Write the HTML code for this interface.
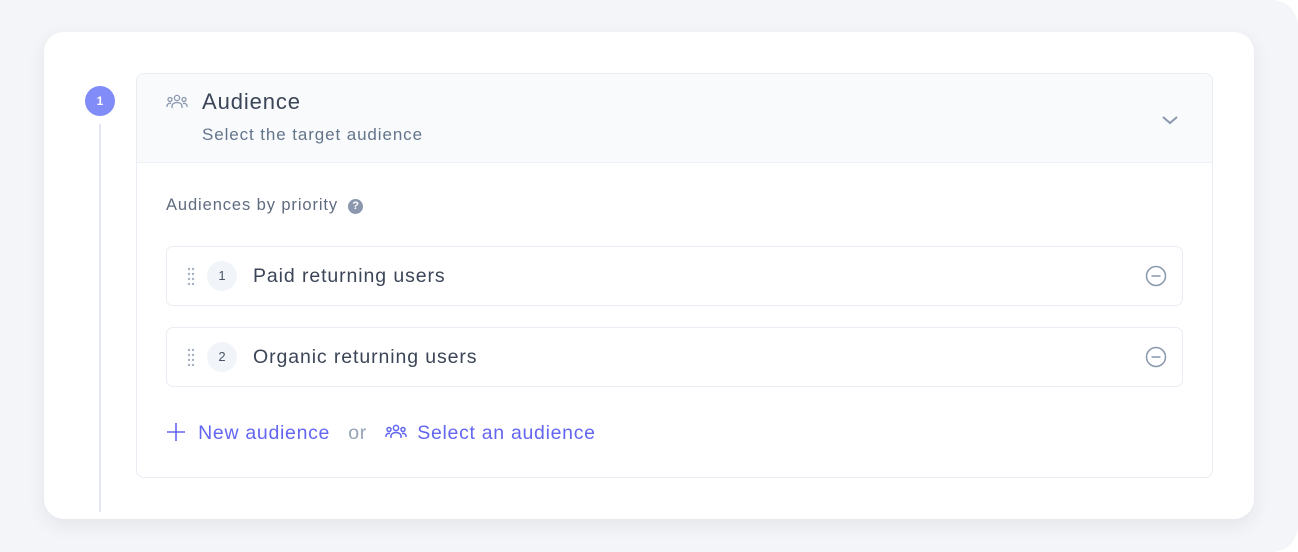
<!DOCTYPE html>
<html><head><style>
*{margin:0;padding:0;box-sizing:border-box}
body{width:1298px;height:552px;background:#fff;font-family:"Liberation Sans",sans-serif;overflow:hidden;position:relative}
.bg{position:absolute;left:0;top:0;width:1298px;height:552px;background:#f4f5f8;border-radius:0 26px 26px 0}
.card{position:absolute;left:44px;top:32px;width:1210px;height:487px;background:#fff;border-radius:20px;box-shadow:0 6px 18px rgba(30,40,80,0.08)}
.step{position:absolute;left:85px;top:86px;width:30px;height:30px;border-radius:50%;background:#818cf8;color:#fff;font-size:12px;font-weight:bold;text-align:center;line-height:30px}
.line{position:absolute;left:99px;top:124px;width:2px;height:388px;background:#e3e6f0}
.panel{position:absolute;left:136px;top:73px;width:1077px;height:405px;border:1px solid #e9edf3;border-radius:8px;overflow:hidden}
.head{height:89px;background:#f8fafc;border-bottom:1px solid #edf0f5;position:relative}
.t{position:absolute;left:65px;top:15px;font-size:22px;letter-spacing:0.9px;color:#3b4557}
.s{position:absolute;left:65px;top:51px;font-size:17px;letter-spacing:0.9px;color:#64748b}
.lbl{position:absolute;left:29px;top:122px;font-size:16.5px;letter-spacing:0.9px;color:#5f6b7f}
.q{display:inline-block;width:15px;height:15px;border-radius:50%;background:#8a97ad;color:#fff;font-size:11px;font-weight:bold;text-align:center;line-height:15px;margin-left:10px;vertical-align:1px;letter-spacing:0}
.row{position:absolute;left:29px;width:1017px;height:60px;border:1px solid #e9edf3;border-radius:7px}
.num{position:absolute;left:40px;top:14px;width:30px;height:30px;border-radius:50%;background:#f1f4f8;color:#4b5568;font-size:13px;text-align:center;line-height:30px}
.rt{position:absolute;left:86px;top:18px;font-size:19.5px;letter-spacing:0.9px;color:#3b4557;font-weight:500}
.dots{position:absolute;left:20px;top:20px}
.min{position:absolute;right:15px;top:18px}
.links{position:absolute;left:29px;top:348px;font-size:19.5px;letter-spacing:0.7px;color:#6366f1;white-space:nowrap}
</style></head><body>
<div class="bg"></div>
<div class="card"></div>
<div class="step">1</div>
<div class="line"></div>
<div class="panel">
 <div class="head">
  <svg style="position:absolute;left:29px;top:20px" width="22" height="16" viewBox="0 0 22 16" fill="none" stroke="#8a97ad" stroke-width="1.3"><circle cx="11" cy="4" r="2.6"/><circle cx="4" cy="5.5" r="2"/><circle cx="18" cy="5.5" r="2"/><path d="M6 14v-2a5 3.5 0 0 1 10 0v2M1 13v-1.5a3 2.5 0 0 1 4-2M21 13v-1.5a3 2.5 0 0 0-4-2"/></svg>
  <div class="t">Audience</div>
  <div class="s">Select the target audience</div>
  <svg style="position:absolute;left:1024px;top:40px" width="18" height="12" viewBox="0 0 18 12" fill="none" stroke="#8a97ad" stroke-width="2"><path d="M2 3l7 6 7-6"/></svg>
 </div>
 <div class="lbl">Audiences by priority<span class="q">?</span></div>
 <div class="row" style="top:172px">
  <svg class="dots" width="8" height="18" fill="#a5b0c2"><circle cx="2" cy="2" r="1.2"/><circle cx="6" cy="2" r="1.2"/><circle cx="2" cy="7" r="1.2"/><circle cx="6" cy="7" r="1.2"/><circle cx="2" cy="12" r="1.2"/><circle cx="6" cy="12" r="1.2"/><circle cx="2" cy="17" r="1.2"/><circle cx="6" cy="17" r="1.2"/></svg>
  <div class="num">1</div><div class="rt">Paid returning users</div>
  <svg class="min" width="22" height="22" fill="none" stroke="#8a97ad" stroke-width="1.5"><circle cx="11" cy="11" r="9.5"/><path d="M6.5 11h9"/></svg>
 </div>
 <div class="row" style="top:253px">
  <svg class="dots" width="8" height="18" fill="#a5b0c2"><circle cx="2" cy="2" r="1.2"/><circle cx="6" cy="2" r="1.2"/><circle cx="2" cy="7" r="1.2"/><circle cx="6" cy="7" r="1.2"/><circle cx="2" cy="12" r="1.2"/><circle cx="6" cy="12" r="1.2"/><circle cx="2" cy="17" r="1.2"/><circle cx="6" cy="17" r="1.2"/></svg>
  <div class="num">2</div><div class="rt">Organic returning users</div>
  <svg class="min" width="22" height="22" fill="none" stroke="#8a97ad" stroke-width="1.5"><circle cx="11" cy="11" r="9.5"/><path d="M6.5 11h9"/></svg>
 </div>
 <div class="links">
  <svg width="20" height="20" style="vertical-align:-3px" fill="none" stroke="#6366f1" stroke-width="1.6"><path d="M10 1v18M1 10h18"/></svg>
  <span style="margin-left:6px">New audience</span>
  <span style="color:#94a3b8;margin:0 12px 0 12px">or</span>
  <svg width="22" height="16" style="vertical-align:-1px" viewBox="0 0 22 16" fill="none" stroke="#6366f1" stroke-width="1.5"><circle cx="11" cy="4" r="2.6"/><circle cx="4" cy="5.5" r="2"/><circle cx="18" cy="5.5" r="2"/><path d="M6 14v-2a5 3.5 0 0 1 10 0v2M1 13v-1.5a3 2.5 0 0 1 4-2M21 13v-1.5a3 2.5 0 0 0-4-2"/></svg>
  <span style="margin-left:4px">Select an audience</span>
 </div>
</div>
</body></html>
